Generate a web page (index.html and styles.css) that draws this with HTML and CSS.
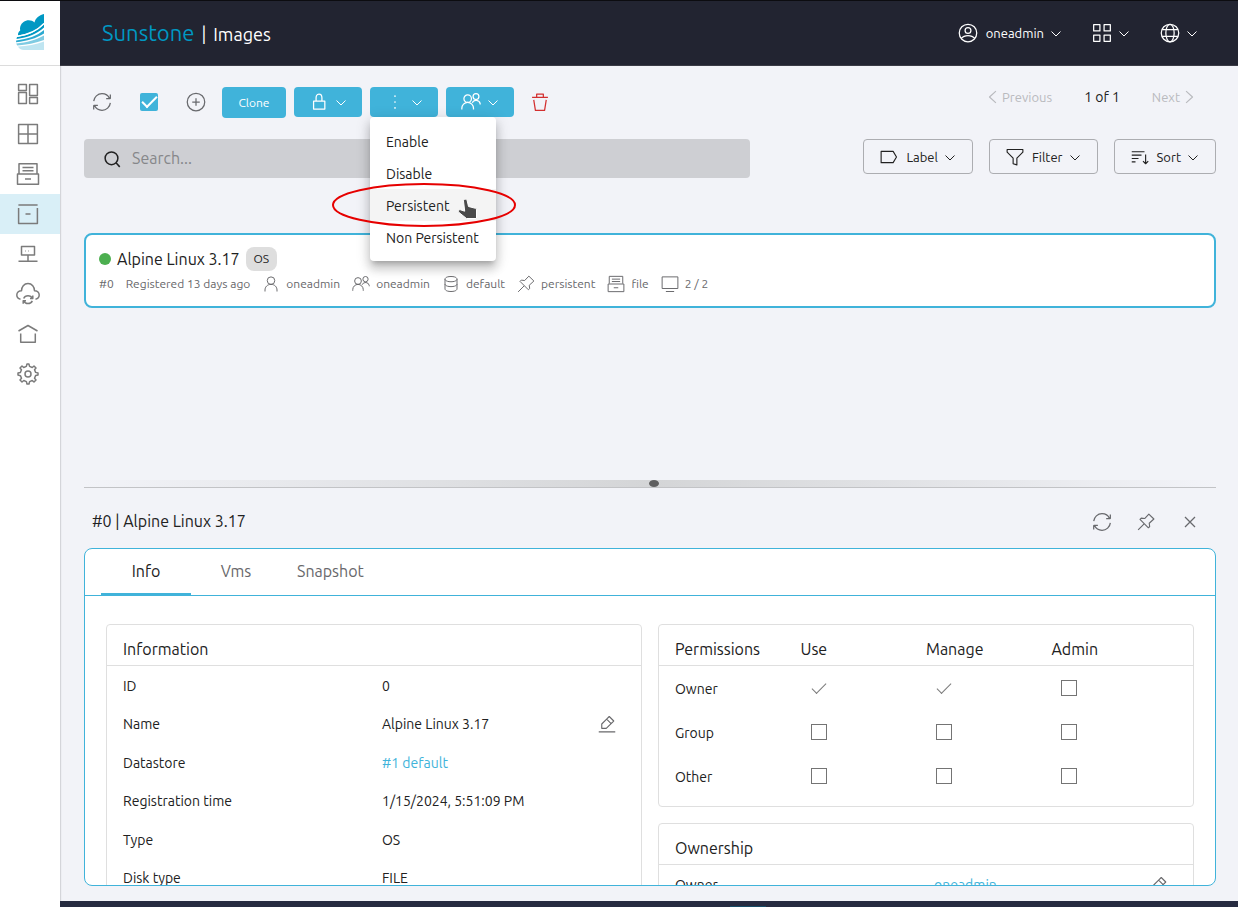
FILE: index.html
```html
<!DOCTYPE html>
<html lang="en">
  <head>
    <meta charset="UTF-8" />
    <meta name="viewport" content="width=device-width, initial-scale=1.0" />
    <title>Sunstone | Images</title>
    <link rel="stylesheet" href="styles.css">
  </head>
  <body>
    <svg class="sprite" aria-hidden="true">
      <symbol id="dashboard" viewBox="0 0 24 24"><path d="M2.6 2.6h7.8v5.8H2.6zM13.6 2.6h7.8v10.8h-7.8zM2.6 10.6h7.8v10.8H2.6zM13.6 15.6h7.8v5.8h-7.8z" /></symbol>
      <symbol id="window" viewBox="0 0 24 24"><path d="M2.6 2.6h18.8v18.8H2.6zM12 2.6v18.8M2.6 12h18.8" /></symbol>
      <symbol id="archive" viewBox="0 0 24 24"><path d="M3 11.5V1.8h18v9.7M1.5 12h21v10.2h-21zM6.5 5.5h11M6.5 8.7h11M9 17h6" /></symbol>
      <symbol id="box" viewBox="0 0 24 24"><path d="M2.6 6v15.4h18.8V6M2.4 3h19.2M9.5 12h5" /></symbol>
      <symbol id="network" viewBox="0 0 24 24"><path d="M5.5 4.5h13V13h-13zM12 13v6M2.5 19.2h19M9 9h.5M12.5 9h.5" /></symbol>
      <symbol id="cloud" viewBox="0 0 24 24"><path d="M4.5 17.3C2.3 16.8.8 15.2.8 13c0-2.600 2.200-4.300 4.700-4.300C5.500 4.800 8 1.500 12 1.500s6.500 3.300 6.500 7.200c2.500 0 4.700 1.700 4.700 4.300 0 2.200-1.500 3.800-3.700 4.300M16.500 16.500c-1-2-2.600-2.700-4.500-2.700-2 0-3.600 1-4.300 2.700M7.500 18.600c1 2 2.500 3 4.500 3 1.900 0 3.500-.9 4.300-2.700M14 16.600h2.800v-3M10 18.800H7.200v3" /></symbol>
      <symbol id="home" viewBox="0 0 24 24"><path d="M2.500 9L12 3.500 21.500 9M4.700 11.500v8.700h14.600v-8.700" /></symbol>
      <symbol id="settings" viewBox="0 0 24 24"><path d="M12 15a3 3 0 1 0 0-6 3 3 0 0 0 0 6z" /><path d="M19.622 10.395l-1.097-2.650L20 6l-2-2-1.735 1.483-2.707-1.113L12.935 2h-1.954l-.632 2.401-2.645 1.115L6 4 4 6l1.453 1.789-1.080 2.657L2 11v2l2.401.656 1.115 2.644L4 18l2 2 1.791-1.460 2.606 1.072L11 22h2l.604-2.387 2.651-1.097C16.697 18.831 18 20 18 20l2-2-1.484-1.751 1.098-2.651 2.386-.621V11z" /></symbol>
      <symbol id="refresh" viewBox="0 0 24 24"><path d="M21.168 8A10.003 10.003 0 0 0 12 2C6.815 2 2.551 5.947 2.050 11M17 8h4.400a.6.600 0 0 0 .6-.6V3M2.881 16A10.003 10.003 0 0 0 12.050 22c5.185 0 9.449-3.947 9.950-9M7.050 16h-4.400a.6.600 0 0 0-.6.600V21" /></symbol>
      <symbol id="plus" viewBox="0 0 24 24"><path d="M7.500 12h9M12 7.500v9" /><circle cx="12" cy="12" r="10.500" /></symbol>
      <symbol id="lock" viewBox="0 0 24 24"><path d="M8.500 11V7c0-1.600.5-4.500 3.500-4.500s3.500 2.900 3.500 4.500v4M5.500 11h13.500v9.500H5.500z" /></symbol>
      <symbol id="more" viewBox="0 0 24 24"><path d="M12 5v.1M12 12v.1M12 19v.1" /></symbol>
      <symbol id="group" viewBox="0 0 24 24"><path d="M1 21v-1.500a7 7 0 0 1 14 0V21M13.500 13a5 5 0 0 1 9.500 1v1" /><circle cx="8" cy="8" r="4.500" /><circle cx="18" cy="5.500" r="3.500" /></symbol>
      <symbol id="user" viewBox="0 0 24 24"><path d="M4 22v-2c0-4 3-7.500 8-7.500s8 3.500 8 7.500v2" /><circle cx="12" cy="7.500" r="5" /></symbol>
      <symbol id="account" viewBox="0 0 24 24"><circle cx="12" cy="12" r="10.500" /><circle cx="12" cy="9" r="3.500" /><path d="M4 18.500c1.500-2 4-3.500 8-3.500s6.500 1.500 8 3.500" /></symbol>
      <symbol id="grid" viewBox="0 0 24 24"><path d="M2 2h7.500v7.500H2zM14.500 2H22v7.500h-7.500zM2 14.500h7.500V22H2zM14.500 14.500H22V22h-7.500z" /></symbol>
      <symbol id="globe" viewBox="0 0 24 24"><circle cx="12" cy="12" r="10.500" /><ellipse cx="12" cy="12" rx="5" ry="10.500" /><path d="M2.500 8h19M2.500 16h19" /></symbol>
      <symbol id="chevron" viewBox="0 0 12 12"><path d="M1.500 4.500L6 9l4.500-4.500" /></symbol>
      <symbol id="left" viewBox="0 0 12 12"><path d="M8.500 1L3 6l5.500 5" /></symbol>
      <symbol id="right" viewBox="0 0 12 12"><path d="M3.500 1L9 6l-5.500 5" /></symbol>
      <symbol id="trash" viewBox="0 0 24 24"><path d="M2.500 6.500h19M8 6V2.500h8V6M4.500 9.500l2 12.500h11l2-12.500" /></symbol>
      <symbol id="search" viewBox="0 0 24 24"><circle cx="10" cy="11" r="8.500" /><path d="M16 17l5 5.500" /></symbol>
      <symbol id="label" viewBox="0 0 24 24"><path d="M1.500 4.500h16l4.500 7.500-4.500 7.500h-16z" /></symbol>
      <symbol id="filter" viewBox="0 0 24 24"><path d="M1.500 2h21v3.500l-8 8V22.500L9.500 21v-7.500l-8-8z" /></symbol>
      <symbol id="sort" viewBox="0 0 24 24"><path d="M14 9.500H1M10 14H1M6 18.500H1M18 5H1M19.500 8.500V21M23 17.500L19.500 21 16 17.500" /></symbol>
      <symbol id="database" viewBox="0 0 24 24"><path d="M4 12v6.500s0 3.500 8 3.500 8-3.500 8-3.500V12M4 5.500V12s0 3.500 8 3.500 8-3.500 8-3.500V5.500M12 2c8 0 8 3.500 8 3.500s0 3.500-8 3.500-8-3.500-8-3.500S4 2 12 2z" /></symbol>
      <symbol id="pin" viewBox="0 0 24 24"><path d="M9.500 14.500L1.500 22.500M4 8.500L15.200 19.700l1.700-1.700-.6-4.300 6.200-5.700L15.800 1.500 10.200 7.400 5.700 6.800z" /></symbol>
      <symbol id="monitor" viewBox="0 0 24 24"><path d="M1.500 2.500h21V18h-21zM6.500 22h11" /></symbol>
      <symbol id="close" viewBox="0 0 24 24"><path d="M6 6l12 12M18 6L6 18" /></symbol>
      <symbol id="edit" viewBox="0 0 24 24"><path d="M1 22.500h22M11.500 5.500L15 2l6 6-3.500 3.500M11.500 5.500L5 12v5.800h6l6.500-6.300M11.500 5.500l6 6" /></symbol>
    </svg>

    <aside class="sidebar">
      <a class="logo" href="#" aria-label="Sunstone">
        <svg viewBox="0 0 28 36">
          <path fill="#0098c3" d="M28 0C23 1 19 5 18.500 8.500 16 6 11 5.500 7.500 8 4.500 10 3.500 13.500 4.200 16.500 2.500 17.800 1.800 19.500 2 21.500 12 20 21 17 28 9z" />
          <path fill="#0098c3" d="M1 23C12 21.500 21 17.500 28 10v3.500C20 20.500 12 23.500.5 25z" />
          <path fill="#2ba9d0" d="M.2 26.500C12 25 21 22 28 16v3.500C20 24.500 11 27 0 28.200z" />
          <path fill="#7fcbe2" d="M.2 29.500C11 28.500 20 26 28 21.500V26C20 29 10 31 1.200 31.500z" />
          <path fill="#bfe5f1" d="M2 32.500C11 32 20 30.500 28 27.500V36H8c-3 0-5-1.500-6-3.500z" />
          <path fill="none" stroke="#fff" stroke-width="1.300" d="M1 22.300C12 20.800 21 17 28 9.500" />
        </svg>
      </a>
      <nav class="menu">
        <a class="menu-item" href="#" aria-label="Dashboard"><svg class="icon icon-lg"><use href="#dashboard" /></svg></a>
        <a class="menu-item" href="#" aria-label="Instances"><svg class="icon icon-lg"><use href="#window" /></svg></a>
        <a class="menu-item" href="#" aria-label="Templates"><svg class="icon icon-lg"><use href="#archive" /></svg></a>
        <a class="menu-item active" href="#" aria-label="Storage"><svg class="icon icon-lg"><use href="#box" /></svg></a>
        <a class="menu-item" href="#" aria-label="Networks"><svg class="icon icon-lg"><use href="#network" /></svg></a>
        <a class="menu-item" href="#" aria-label="Infrastructure"><svg class="icon icon-lg"><use href="#cloud" /></svg></a>
        <a class="menu-item" href="#" aria-label="System"><svg class="icon icon-lg"><use href="#home" /></svg></a>
        <a class="menu-item" href="#" aria-label="Settings"><svg class="icon icon-lg"><use href="#settings" /></svg></a>
      </nav>
    </aside>

    <div class="page">
      <header class="topbar">
        <h1 class="brand"><span class="brand-name">Sunstone</span><span>|</span><span>Images</span></h1>
        <div class="topbar-actions">
          <button class="top-btn"><svg class="icon icon-md"><use href="#account" /></svg>oneadmin<svg class="icon chevron"><use href="#chevron" /></svg></button>
          <button class="top-btn" aria-label="Views"><svg class="icon icon-md"><use href="#grid" /></svg><svg class="icon chevron"><use href="#chevron" /></svg></button>
          <button class="top-btn" aria-label="Zone"><svg class="icon icon-md"><use href="#globe" /></svg><svg class="icon chevron"><use href="#chevron" /></svg></button>
        </div>
      </header>

      <main class="split">
        <section class="list-pane">
          <div class="toolbar">
            <button class="icon-btn" aria-label="Refresh"><svg class="icon icon-md"><use href="#refresh" /></svg></button>
            <label class="select-all"><input class="check-all" type="checkbox" aria-label="Select all" checked /></label>
            <button class="icon-btn" aria-label="Create"><svg class="icon icon-md"><use href="#plus" /></svg></button>
            <button class="btn btn-clone">Clone</button>
            <button class="btn" aria-label="Lock"><svg class="icon icon-md"><use href="#lock" /></svg><svg class="icon chevron"><use href="#chevron" /></svg></button>
            <div class="dropdown">
              <button class="btn" aria-label="More actions" aria-expanded="true"><svg class="icon icon-md dots"><use href="#more" /></svg><svg class="icon chevron"><use href="#chevron" /></svg></button>
              <div class="dropdown-menu">
                <button class="dropdown-item">Enable</button>
                <button class="dropdown-item">Disable</button>
                <button class="dropdown-item hover">Persistent</button>
                <button class="dropdown-item">Non Persistent</button>
                <svg class="marker" viewBox="0 0 186 46"><ellipse cx="93" cy="23" rx="91" ry="21" /></svg>
                <svg class="pointer" viewBox="0 0 20 22"><path d="M5.500 3c0-2 3-2.500 3.700-.3l1.300 5.800 7 1.800c.8.200 1 .8 1 1.600V20.500H8.500L1 14.500c-1.200-1.300-.3-3.200 1.500-2.700l4.200 1.400z" /></svg>
              </div>
            </div>
            <button class="btn" aria-label="Ownership"><svg class="icon icon-md"><use href="#group" /></svg><svg class="icon chevron"><use href="#chevron" /></svg></button>
            <button class="icon-btn danger" aria-label="Delete"><svg class="icon icon-md"><use href="#trash" /></svg></button>
            <div class="pagination">
              <button class="page-btn" disabled><svg class="icon page-arrow"><use href="#left" /></svg>Previous</button>
              <span>1 of 1</span>
              <button class="page-btn" disabled>Next<svg class="icon page-arrow"><use href="#right" /></svg></button>
            </div>
          </div>

          <div class="filters">
            <label class="search">
              <svg class="icon icon-sm search-icon"><use href="#search" /></svg>
              <input class="search-input" type="search" placeholder="Search..." aria-label="Search" />
            </label>
            <div class="filter-buttons">
              <button class="btn-outline"><svg class="icon icon-sm"><use href="#label" /></svg>Label<svg class="icon chevron"><use href="#chevron" /></svg></button>
              <button class="btn-outline"><svg class="icon icon-sm"><use href="#filter" /></svg>Filter<svg class="icon chevron"><use href="#chevron" /></svg></button>
              <button class="btn-outline"><svg class="icon icon-sm"><use href="#sort" /></svg>Sort<svg class="icon chevron"><use href="#chevron" /></svg></button>
            </div>
          </div>

          <article class="image-card">
            <div class="image-title">
              <span class="status"></span>
              <span>Alpine Linux 3.17</span>
              <span class="badge">OS</span>
            </div>
            <div class="image-meta">
              <span>#0</span>
              <span>Registered 13 days ago</span>
              <span class="meta"><svg class="icon icon-sm"><use href="#user" /></svg>oneadmin</span>
              <span class="meta"><svg class="icon icon-sm"><use href="#group" /></svg>oneadmin</span>
              <span class="meta"><svg class="icon icon-sm"><use href="#database" /></svg>default</span>
              <span class="meta"><svg class="icon icon-sm"><use href="#pin" /></svg>persistent</span>
              <span class="meta"><svg class="icon icon-sm"><use href="#archive" /></svg>file</span>
              <span class="meta"><svg class="icon icon-sm"><use href="#monitor" /></svg>2 / 2</span>
            </div>
          </article>
        </section>

        <div class="splitter"><span class="handle"></span></div>

        <section class="detail-pane">
          <div class="detail-head">
            <h2 class="detail-title">#0 | Alpine Linux 3.17</h2>
            <button class="icon-btn" aria-label="Refresh image"><svg class="icon icon-md"><use href="#refresh" /></svg></button>
            <button class="icon-btn" aria-label="Pin"><svg class="icon icon-sm"><use href="#pin" /></svg></button>
            <button class="icon-btn" aria-label="Close"><svg class="icon icon-md"><use href="#close" /></svg></button>
          </div>
          <div class="panel">
            <div class="tabs" role="tablist">
              <button class="tab selected" role="tab" aria-selected="true">Info</button>
              <button class="tab" role="tab">Vms</button>
              <button class="tab" role="tab">Snapshot</button>
            </div>
            <div class="panel-body">
              <div class="card">
                <h3 class="card-title">Information</h3>
                <dl class="info">
                  <div class="info-row"><dt>ID</dt><dd>0</dd></div>
                  <div class="info-row"><dt>Name</dt><dd>Alpine Linux 3.17 <button class="edit" aria-label="Edit name"><svg class="icon icon-sm"><use href="#edit" /></svg></button></dd></div>
                  <div class="info-row"><dt>Datastore</dt><dd><a class="link" href="#">#1 default</a></dd></div>
                  <div class="info-row"><dt>Registration time</dt><dd>1/15/2024, 5:51:09 PM</dd></div>
                  <div class="info-row"><dt>Type</dt><dd>OS</dd></div>
                  <div class="info-row"><dt>Disk type</dt><dd>FILE</dd></div>
                </dl>
              </div>
              <div class="column">
                <div class="card">
                  <table class="permissions">
                    <thead>
                      <tr><th>Permissions</th><th>Use</th><th>Manage</th><th>Admin</th></tr>
                    </thead>
                    <tbody>
                      <tr>
                        <td>Owner</td>
                        <td><input class="perm" type="checkbox" aria-label="Owner use" checked /></td>
                        <td><input class="perm" type="checkbox" aria-label="Owner manage" checked /></td>
                        <td><input class="perm" type="checkbox" aria-label="Owner admin" /></td>
                      </tr>
                      <tr>
                        <td>Group</td>
                        <td><input class="perm" type="checkbox" aria-label="Group use" /></td>
                        <td><input class="perm" type="checkbox" aria-label="Group manage" /></td>
                        <td><input class="perm" type="checkbox" aria-label="Group admin" /></td>
                      </tr>
                      <tr>
                        <td>Other</td>
                        <td><input class="perm" type="checkbox" aria-label="Other use" /></td>
                        <td><input class="perm" type="checkbox" aria-label="Other manage" /></td>
                        <td><input class="perm" type="checkbox" aria-label="Other admin" /></td>
                      </tr>
                    </tbody>
                  </table>
                </div>
                <div class="card">
                  <h3 class="card-title">Ownership</h3>
                  <dl class="info">
                    <div class="info-row"><dt>Owner</dt><dd><a class="link" href="#">oneadmin</a> <button class="edit" aria-label="Edit owner"><svg class="icon icon-sm"><use href="#edit" /></svg></button></dd></div>
                  </dl>
                </div>
              </div>
            </div>
          </div>
        </section>
      </main>
      <footer class="footer"><span class="footer-mark"></span></footer>
    </div>
  </body>
</html>
```
FILE: styles.css
```css
* {
  box-sizing: border-box;
}
body {
  display: flex;
  height: 100vh;
  margin: 0;
  border-top: 1px solid #0c0c10;
  overflow: hidden;
  background-color: #f2f3f8;
  color: #212121;
  font-family: Ubuntu, Roboto, "Noto Sans", sans-serif;
  font-size: 14px;
  line-height: 20px;
}
h1,
h2,
h3,
dl,
dd {
  margin: 0;
  font-weight: 400;
}
button {
  display: inline-flex;
  align-items: center;
  justify-content: center;
  padding: 0;
  border: none;
  background: none;
  color: inherit;
  font: inherit;
  cursor: pointer;
}
a {
  text-decoration: none;
}

/* icons */
.sprite {
  position: absolute;
  width: 0;
  height: 0;
}
.icon {
  flex: none;
  fill: none;
  stroke: currentColor;
  stroke-width: 1.5;
  stroke-linejoin: round;
}
.icon-sm {
  width: 18px;
  height: 18px;
}
.icon-md {
  width: 20px;
  height: 20px;
}
.icon-lg {
  width: 24px;
  height: 24px;
}
.chevron {
  width: 12px;
  height: 12px;
  margin-left: -2px;
  stroke-width: 1;
}

/* sidebar */
.sidebar {
  flex: none;
  width: 60px;
  background-color: #fff;
  box-shadow: 1px 0 1px #d4d5da;
}
.logo {
  display: flex;
  height: 65px;
  padding: 13px 16px;
  border-bottom: 1px solid #dcdcdc;
}
.logo svg {
  width: 28px;
  height: 36px;
}
.menu {
  padding-top: 8px;
}
.menu-item {
  display: flex;
  align-items: center;
  height: 40px;
  padding: 0 16px;
  color: #7b7b7b;
}
.menu-item.active {
  background-color: #d9eff7;
}

/* top bar */
.page {
  display: flex;
  flex: 1;
  flex-direction: column;
  min-width: 0;
}
.topbar {
  display: flex;
  flex: none;
  align-items: center;
  justify-content: space-between;
  height: 65px;
  padding: 0 40px 0 42px;
  border-bottom: 1px solid #3a3b45;
  background-color: #222431;
  color: #fff;
}
.brand {
  display: flex;
  align-items: baseline;
  gap: 7px;
  font-size: 18px;
}
.brand-name {
  color: #0098c3;
  font-size: 22px;
}
.topbar-actions {
  display: flex;
  gap: 30px;
}
.top-btn {
  gap: 8px;
  font-size: 13px;
}

/* list */
.split {
  display: grid;
  flex: 1;
  grid-template-rows: 1fr 7px 1fr;
  min-height: 0;
  padding: 0 22px 0 24px;
}
.list-pane {
  padding-top: 21px;
}
.toolbar {
  display: flex;
  align-items: flex-start;
  gap: 8px;
  height: 31px;
}
.icon-btn {
  width: 36px;
  height: 30px;
  color: #68696d;
}
.danger {
  color: #d32f2f;
}
.select-all {
  display: flex;
  align-items: center;
  justify-content: center;
  width: 42px;
  height: 30px;
}
input[type="checkbox"] {
  display: flex;
  align-items: center;
  justify-content: center;
  margin: 0;
  appearance: none;
}
.check-all {
  width: 18px;
  height: 18px;
  border-radius: 2px;
  background-color: #40b3da;
}
input:checked::before {
  flex: none;
  width: 13px;
  height: 6px;
  margin-bottom: 4px;
  border: solid #7b7b7b;
  border-width: 0 0 1px 1px;
  content: "";
  transform: rotate(-45deg);
}
.check-all:checked::before {
  border-color: #fff;
  border-width: 0 0 2px 2px;
}
.btn {
  gap: 8px;
  width: 68px;
  height: 30px;
  border-radius: 4px;
  background-color: #40b3da;
  color: #fff;
}
.btn-clone {
  width: 64px;
  height: 31px;
  font-size: 12px;
}
.dots {
  stroke-width: 2;
  stroke-linecap: round;
}
.dropdown {
  position: relative;
}
.dropdown-menu {
  position: absolute;
  top: 30px;
  left: 0;
  z-index: 2;
  width: 126px;
  padding: 8px 0;
  border-radius: 4px;
  background-color: #fff;
  box-shadow: 0 5px 5px -3px rgba(0, 0, 0, 0.2), 0 8px 10px 1px rgba(0, 0, 0, 0.14), 0 3px 14px 2px rgba(0, 0, 0, 0.12);
}
.dropdown-item {
  justify-content: flex-start;
  width: 100%;
  height: 32px;
  padding: 2px 16px 0;
  white-space: nowrap;
}
.dropdown-item.hover {
  background-color: #f4f4f4;
}
.marker {
  position: absolute;
  top: 65px;
  left: -39px;
  width: 186px;
  height: 46px;
  fill: none;
  stroke: #e60000;
  stroke-width: 2;
}
.pointer {
  position: absolute;
  top: 81px;
  left: 88px;
  width: 20px;
  height: 22px;
  fill: #4a4a4a;
  stroke: #fff;
  stroke-width: 1;
}
.pagination {
  display: flex;
  gap: 32px;
  margin-left: auto;
  padding-right: 20px;
}
.page-btn {
  gap: 2px;
  padding-bottom: 2px;
  color: #b9babe;
  font-size: 13px;
}
.page-arrow {
  width: 14px;
  height: 14px;
  stroke-width: 1;
}
.filters {
  display: flex;
  align-items: flex-start;
  justify-content: space-between;
  gap: 16px;
  margin-top: 21px;
}
.search {
  display: flex;
  flex: 1;
  align-items: center;
  gap: 10px;
  max-width: 666px;
  height: 39px;
  padding: 0 20px;
  border-radius: 4px;
  background-color: #cecfd3;
}
.search-icon {
  stroke-width: 2;
}
.search-input {
  flex: 1;
  padding: 0 0 2px;
  border: none;
  outline: none;
  background: none;
  font: inherit;
  font-size: 16px;
}
.search-input::placeholder {
  color: #86878a;
}
.filter-buttons {
  display: flex;
  gap: 16px;
}
.btn-outline {
  gap: 8px;
  height: 35px;
  padding: 0 16px;
  border: 1px solid #acadb1;
  border-radius: 4px;
  font-size: 13px;
}
.image-card {
  margin-top: 55px;
  padding: 11px 13px 10px;
  border: 2px solid #40b3da;
  border-radius: 8px;
  background-color: #fff;
}
.image-title {
  display: flex;
  align-items: center;
  gap: 6px;
  height: 26px;
  font-size: 16px;
}
.status {
  width: 12px;
  height: 12px;
  border-radius: 50%;
  background-color: #4caf50;
}
.badge {
  padding: 2px 8px;
  border-radius: 8px;
  background-color: #dedede;
  font-size: 12px;
}
.image-meta {
  display: flex;
  align-items: center;
  gap: 12px;
  height: 24px;
  color: #68686b;
  font-size: 12px;
}
.image-meta .icon {
  stroke-width: 1.3;
}
.meta {
  display: flex;
  align-items: center;
  gap: 6px;
}

/* splitter */
.splitter {
  display: flex;
  align-items: center;
  justify-content: center;
  padding-left: 8px;
  background: linear-gradient(to right, #f2f3f8, #d4d5d7, #f2f3f8);
}
.handle {
  width: 10px;
  height: 7px;
  border-radius: 50%;
  background-color: #5f5f60;
}

/* details */
.detail-pane {
  display: flex;
  flex-direction: column;
  min-height: 0;
  padding-bottom: 15px;
  border-top: 1px solid #c2c3c6;
}
.detail-head {
  display: flex;
  align-items: center;
  gap: 8px;
  height: 60px;
  padding: 8px 8px 0;
}
.detail-title {
  flex: 1;
  padding-bottom: 2px;
  font-size: 16px;
}
.panel {
  display: flex;
  flex: 1;
  flex-direction: column;
  min-height: 0;
  overflow: hidden;
  border: 1px solid #40b3da;
  border-radius: 8px;
  background-color: #fff;
}
.tabs {
  display: flex;
  flex: none;
  height: 47px;
  padding: 0 16px;
  border-bottom: 1px solid #40b3da;
}
.tab {
  min-width: 90px;
  padding: 0 16px;
  border-bottom: 2px solid transparent;
  color: #68686b;
  font-size: 16px;
}
.tab.selected {
  border-color: #40b3da;
  color: #212121;
}
.panel-body {
  display: grid;
  grid-template-columns: 1fr 1fr;
  gap: 16px;
  padding: 28px 21px;
}
.column {
  display: flex;
  flex-direction: column;
  gap: 16px;
}
.card {
  border: 1px solid #dfdfdf;
  border-radius: 4px;
}
.card-title,
th {
  height: 41px;
  padding: 8px 16px 0;
  border-bottom: 1px solid #dfdfdf;
  font-size: 16px;
  font-weight: 400;
  line-height: 32px;
}
.info-row {
  display: grid;
  grid-template-columns: 1fr 1fr;
  align-items: center;
  min-height: 39px;
}
.info-row:nth-child(even) {
  min-height: 38px;
}
dt {
  padding-left: 16px;
}
dd {
  display: flex;
  align-items: center;
  justify-content: space-between;
  padding: 0 25px 0 8px;
}
.link {
  color: #40b3da;
}
.edit {
  color: #68686b;
}
.permissions {
  width: 100%;
  margin-bottom: 8px;
  border-spacing: 0;
  table-layout: fixed;
}
th,
td {
  text-align: left;
}
th {
  width: 23.5%;
  padding-left: 8px;
}
th:first-child {
  width: 25%;
  padding-left: 16px;
}
th:last-child {
  width: 28%;
}
td {
  height: 44px;
  padding: 0 0 0 18px;
}
td:first-child {
  padding: 2px 0 0 16px;
}
.perm {
  width: 16px;
  height: 16px;
  border: 1px solid #747474;
}
.perm:checked {
  border-color: transparent;
}

/* footer */
.footer {
  display: flex;
  flex: none;
  align-items: flex-end;
  justify-content: center;
  height: 6px;
  padding-left: 198px;
  background-color: #262b40;
}
.footer-mark {
  width: 36px;
  height: 1px;
  background-color: #164b66;
}
```
